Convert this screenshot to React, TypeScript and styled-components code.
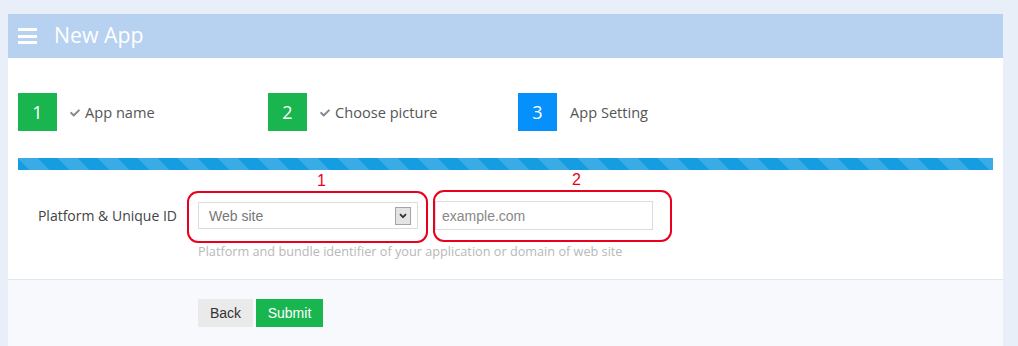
import React from "react"
import styled, { createGlobalStyle } from "styled-components"
import { FaCheck } from "react-icons/fa"

const GlobalStyle = createGlobalStyle`
  html, body {
    margin: 0;
    padding: 0;
    background: #e9eff9;
    font-family: "Open Sans", "Liberation Sans", Arial, sans-serif;
  }
`

type Step = { num: number; label: string; done: boolean }

const steps: Step[] = [
  { num: 1, label: "App name", done: true },
  { num: 2, label: "Choose picture", done: true },
  { num: 3, label: "App Setting", done: false },
]

const App = () => {
  return (
    <>
      <GlobalStyle />
      <Page>
        <Panel>
          <Header>
            <Burger>
              <span />
              <span />
              <span />
            </Burger>
            <Title>New App</Title>
          </Header>
          <Body>
            <Steps>
              {steps.map((s) => (
                <StepItem key={s.num}>
                  <StepNum $done={s.done}>{s.num}</StepNum>
                  <StepLabel>
                    {s.done && (
                      <CheckMark>
                        <FaCheck />
                      </CheckMark>
                    )}
                    {s.label}
                  </StepLabel>
                </StepItem>
              ))}
            </Steps>
            <Stripes />
            <FormRow>
              <Label>Platform &amp; Unique ID</Label>
              <FieldCol>
                <Fields>
                  <Marked>
                    <SelectBox>
                      <span>Web site</span>
                      <ArrowBox>
                        <svg width="8" height="6" viewBox="0 0 8 6">
                          <path d="M1 1.2 L4 4.2 L7 1.2" fill="none" stroke="#333" strokeWidth="1.8" />
                        </svg>
                      </ArrowBox>
                    </SelectBox>
                    <Ring />
                    <Tag $x={119}>1</Tag>
                  </Marked>
                  <Marked>
                    <TextInput placeholder="example.com" />
                    <Ring $wide />
                    <Tag $x={137}>2</Tag>
                  </Marked>
                </Fields>
                <Help>Platform and bundle identifier of your application or domain of web site</Help>
              </FieldCol>
            </FormRow>
          </Body>
          <Footer>
            <BackButton>Back</BackButton>
            <SubmitButton>Submit</SubmitButton>
          </Footer>
        </Panel>
      </Page>
    </>
  )
}

export default App

const Page = styled.div`
width: 1018px;
height: 346px;
overflow: hidden;
padding: 14px 15px 0 8px;
box-sizing: border-box;`

const Panel = styled.div`
width: 995px;
display: flex;
flex-direction: column;`

const Header = styled.div`
height: 44px;
background-color: #b7d1f1;
display: flex;
align-items: center;
padding-left: 10px;`

const Burger = styled.div`
width: 19px;
display: flex;
flex-direction: column;
gap: 3.5px;
margin-right: 17px;
span {
  display: block;
  height: 3px;
  background: #fff;
}`

const Title = styled.div`
color: #fff;
font-size: 21.3px;
line-height: 1;
margin-top: -2px;`

const Body = styled.div`
background: #fff;
padding: 35px 10px 0 10px;
height: 222px;
box-sizing: border-box;
border-bottom: 1px solid #e0e8f4;`

const Steps = styled.div`
display: flex;`

const StepItem = styled.div`
width: 250px;
display: flex;
align-items: center;`

const StepNum = styled.div<{ $done: boolean }>`
width: 39px;
height: 38px;
background: ${(p) => (p.$done ? "#19b54f" : "#0590fc")};
color: #fff;
font-size: 18px;
display: flex;
align-items: center;
justify-content: center;
margin-right: 13px;`

const StepLabel = styled.div`
color: #555;
font-size: 14.6px;
display: flex;
align-items: center;`

const CheckMark = styled.span`
color: #888;
font-size: 10px;
display: inline-flex;
margin-right: 5px;
margin-top: 1px;`

const Stripes = styled.div`
margin-top: 27px;
height: 12px;
width: 975px;
background-color: #169ce0;
background-image: linear-gradient(45deg, rgba(255,255,255,.15) 25%, transparent 25%, transparent 50%, rgba(255,255,255,.15) 50%, rgba(255,255,255,.15) 75%, transparent 75%, transparent);
background-size: 40px 40px;`

const FormRow = styled.div`
display: flex;
margin-top: 31px;`

const Label = styled.div`
width: 159px;
text-align: right;
color: #444;
font-size: 14px;
padding-top: 5px;
margin-right: 21px;`

const FieldCol = styled.div`
display: flex;
flex-direction: column;`

const Fields = styled.div`
display: flex;
align-items: center;
gap: 17px;`

const Marked = styled.div`
position: relative;`

const SelectBox = styled.div`
width: 220px;
height: 27px;
box-sizing: border-box;
border: 1px solid #dcdcdc;
display: flex;
align-items: center;
justify-content: space-between;
padding: 0 6px 0 10px;
font-family: "Liberation Sans", Arial, sans-serif;
font-size: 14px;
color: #777;`

const ArrowBox = styled.div`
width: 16px;
height: 18px;
box-sizing: border-box;
border: 1px solid #a4a4a4;
background: #e4e4e4;
display: flex;
align-items: center;
justify-content: center;`

const TextInput = styled.input`
width: 218px;
height: 29px;
box-sizing: border-box;
border: 1px solid #dcdcdc;
padding: 0 6px;
outline: none;
font-family: "Liberation Sans", Arial, sans-serif;
font-size: 14px;
color: #555;
&::placeholder {
  color: #888;
}`

const Ring = styled.div<{ $wide?: boolean }>`
position: absolute;
left: ${(p) => (p.$wide ? "-2px" : "-11px")};
top: -11px;
width: ${(p) => (p.$wide ? "239px" : "241px")};
height: 52px;
box-sizing: border-box;
border: 2px solid #e8001c;
border-radius: 11px;
pointer-events: none;`

const Tag = styled.div<{ $x: number }>`
position: absolute;
left: ${(p) => p.$x}px;
top: -30px;
color: #e8001c;
font-family: "Liberation Sans", Arial, sans-serif;
font-size: 16px;`

const Help = styled.div`
margin-top: 12px;
color: #b8b8b8;
font-size: 12.7px;`

const Footer = styled.div`
background: #f7f9fd;
height: 80px;
padding: 19px 0 0 190px;
display: flex;
align-items: flex-start;
gap: 3px;`

const BackButton = styled.button`
height: 28px;
width: 55px;
border: none;
background: #eaeaea;
color: #333;
font-family: "Liberation Sans", Arial, sans-serif;
font-size: 14px;
padding: 0;`

const SubmitButton = styled.button`
height: 28px;
width: 67px;
border: none;
background: #19b54f;
color: #fff;
font-family: "Liberation Sans", Arial, sans-serif;
font-size: 14px;
padding: 0;`
